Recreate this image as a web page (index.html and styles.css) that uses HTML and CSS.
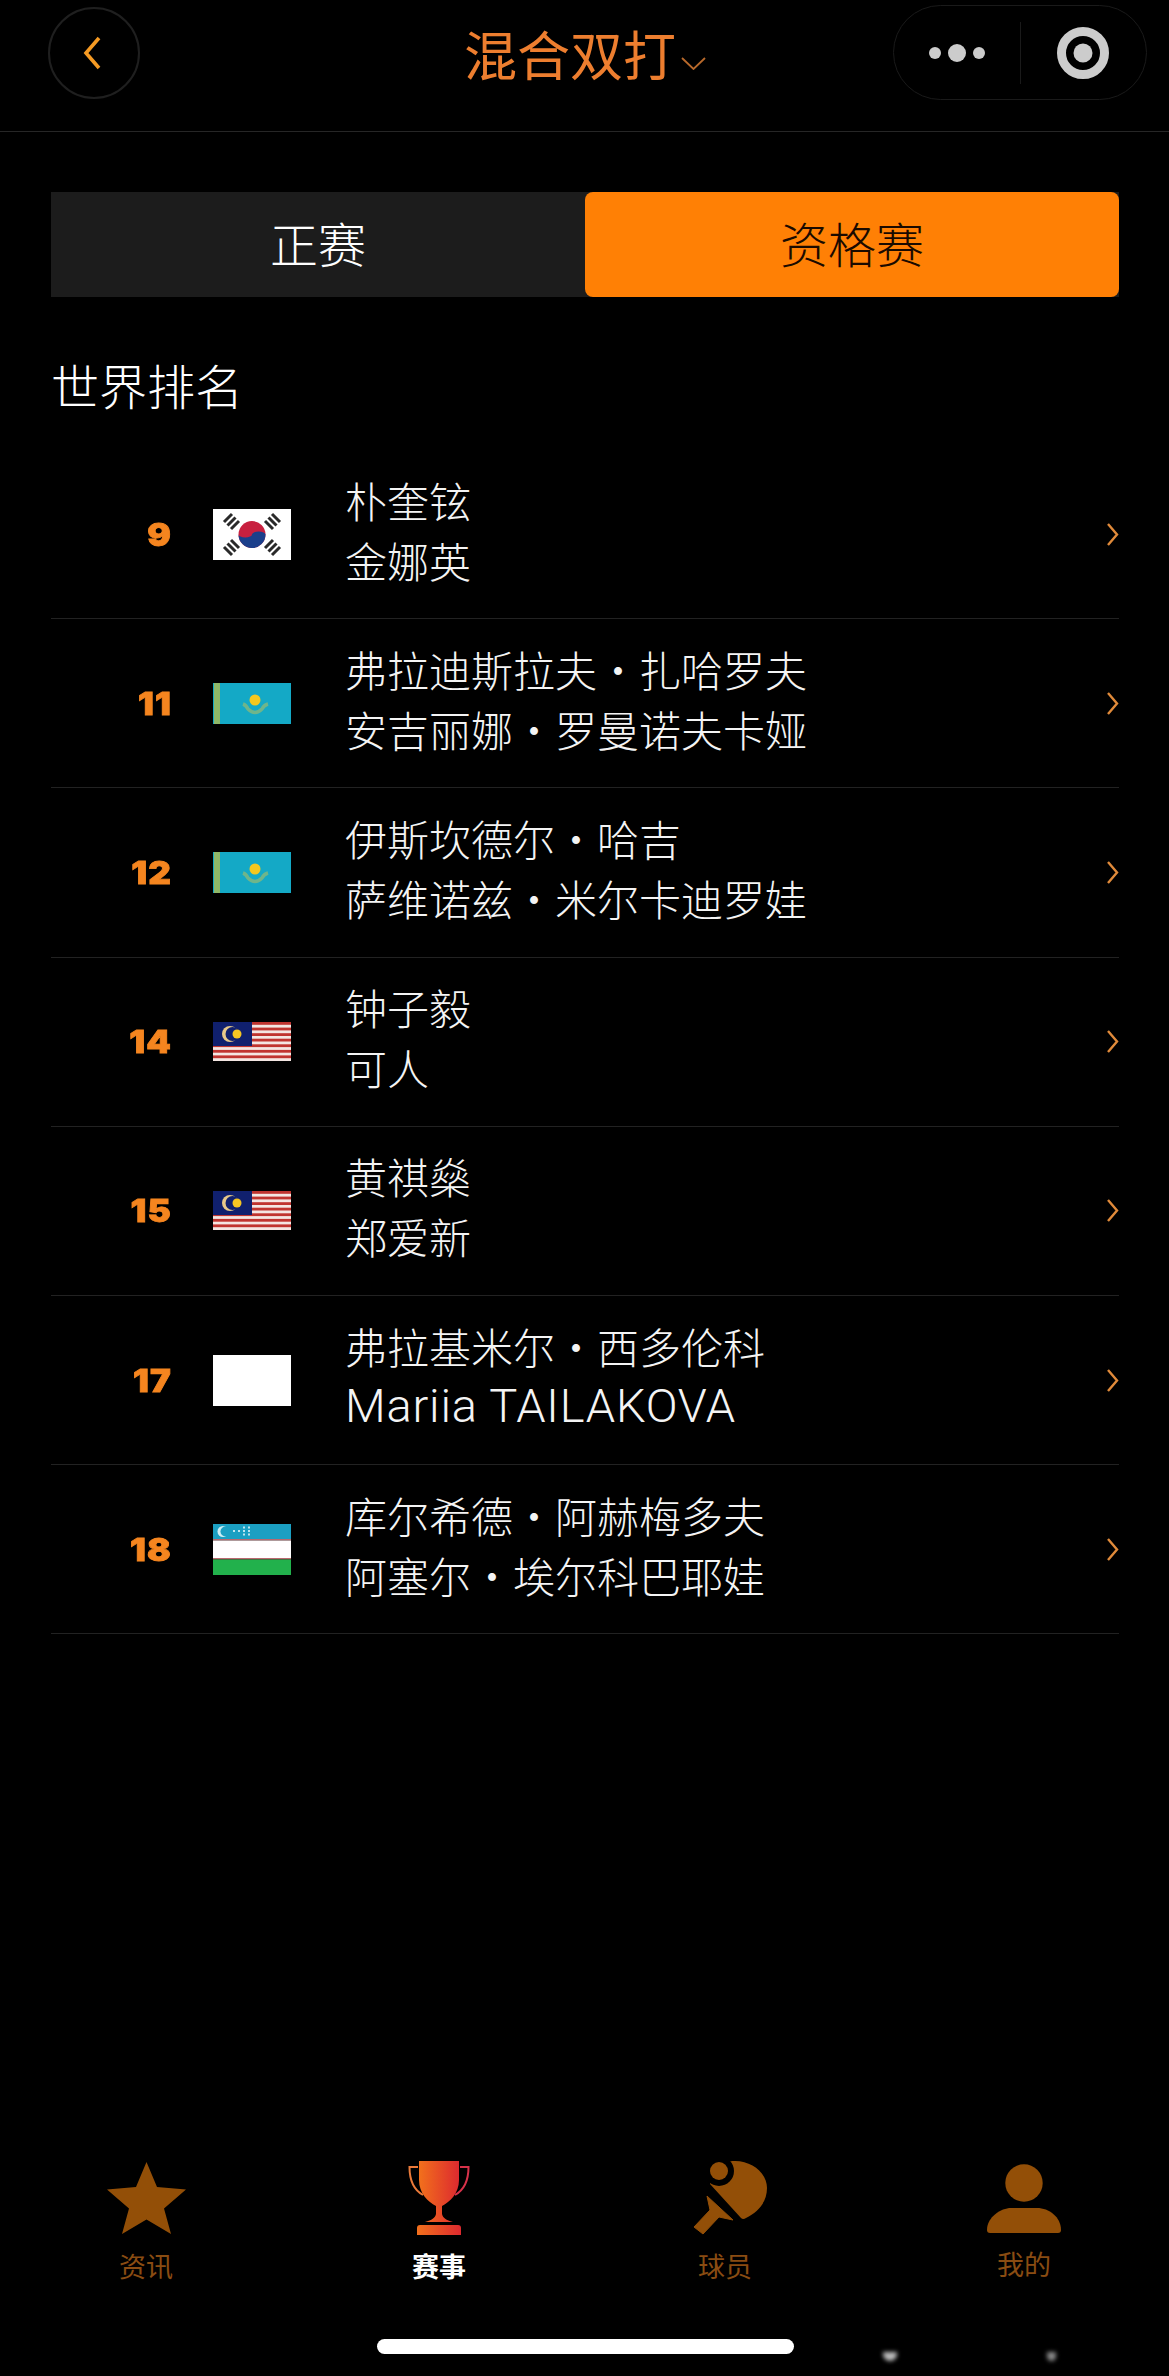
FILE: index.html
```html
<!DOCTYPE html>
<html lang="zh-CN">
<head>
<meta charset="utf-8">
<title>混合双打</title>
<link rel="stylesheet" href="styles.css">
</head>
<body>
<div class="page">
  <header class="header">
    <div class="back"><svg width="18" height="34" viewBox="0 0 18 34"><path d="M16 2 L3 17 L16 32" fill="none" stroke="#f59a23" stroke-width="3.600"/></svg></div>
    <div class="title"><span>混合双打</span><svg class="caret" width="25" height="13" viewBox="0 0 25 13"><path d="M1 1 L12.5 12 L24 1" fill="none" stroke="#b8692b" stroke-width="1.8"/></svg></div>
    <div class="capsule">
      <div class="capsule-part"><svg width="58" height="20" viewBox="0 0 58 20"><circle cx="7" cy="10" r="6" fill="#ccc"/><circle cx="29" cy="10" r="9" fill="#ccc"/><circle cx="51" cy="10" r="6" fill="#ccc"/></svg></div>
      <div class="capsule-line"></div>
      <div class="capsule-part"><svg width="52" height="52" viewBox="0 0 52 52"><circle cx="26" cy="26" r="21.500" fill="none" stroke="#ccc" stroke-width="9"/><circle cx="26" cy="26" r="9.500" fill="#ccc"/></svg></div>
    </div>
  </header>

  <div class="tabs">
    <div class="tab">正赛</div>
    <div class="tab tab-on">资格赛</div>
  </div>

  <h1 class="heading">世界排名</h1>

  <ul class="rows">
    <li class="row">
      <span class="rank">9</span>
      <svg class="flag" width="78" height="51" viewBox="0 0 78 51">
        <rect width="78" height="51" fill="#fff"/>
        <circle cx="39" cy="25.5" r="13.5" fill="#c8203f"/>
        <path d="M25.5 25.5 A13.5 13.5 0 0 0 52.5 25.5 A6.75 3 0 0 0 39 25.5 A6.75 3 0 0 1 25.5 25.500Z" fill="#1b3f8b"/>
        <g stroke="#2a2a2a" stroke-width="3">
          <path d="M11 13 L19 5 M14.500 16.500 L22.500 8.500 M18 20 L26 12"/>
          <path d="M52 12 L60 20 M55.500 8.500 L63.500 16.500 M59 5 L67 13"/>
          <path d="M11 38 L19 46 M14.500 34.500 L22.500 42.500 M18 31 L26 39"/>
          <path d="M52 39 L60 31 M55.500 42.500 L63.500 34.500 M59 46 L67 38"/>
        </g>
      </svg>
      <div class="names"><div>朴奎铉</div><div>金娜英</div></div>
      <svg class="more" width="13" height="25" viewBox="0 0 13 25"><path d="M2 2 L11 12.500 L2 23" fill="none" stroke="#e08a3a" stroke-width="2.400"/></svg>
    </li>
    <li class="row">
      <span class="rank">11</span>
      <svg class="flag" width="78" height="41" viewBox="0 0 78 41">
        <rect width="78" height="41" fill="#14a9c6"/>
        <rect x="1" width="6" height="41" fill="#8fb868"/>
        <path d="M30 21 Q33 22 35 26 Q42 33 49 26 Q51 22 55 21" fill="none" stroke="#6fb58a" stroke-width="3.500"/>
        <circle cx="42" cy="17" r="5.500" fill="#f4c81f"/>
      </svg>
      <div class="names"><div>弗拉迪斯拉夫・扎哈罗夫</div><div>安吉丽娜・罗曼诺夫卡娅</div></div>
      <svg class="more" width="13" height="25" viewBox="0 0 13 25"><path d="M2 2 L11 12.500 L2 23" fill="none" stroke="#e08a3a" stroke-width="2.400"/></svg>
    </li>
    <li class="row">
      <span class="rank">12</span>
      <svg class="flag" width="78" height="41" viewBox="0 0 78 41">
        <rect width="78" height="41" fill="#14a9c6"/>
        <rect x="1" width="6" height="41" fill="#8fb868"/>
        <path d="M30 21 Q33 22 35 26 Q42 33 49 26 Q51 22 55 21" fill="none" stroke="#6fb58a" stroke-width="3.500"/>
        <circle cx="42" cy="17" r="5.500" fill="#f4c81f"/>
      </svg>
      <div class="names"><div>伊斯坎德尔・哈吉</div><div>萨维诺兹・米尔卡迪罗娃</div></div>
      <svg class="more" width="13" height="25" viewBox="0 0 13 25"><path d="M2 2 L11 12.500 L2 23" fill="none" stroke="#e08a3a" stroke-width="2.400"/></svg>
    </li>
    <li class="row">
      <span class="rank">14</span>
      <svg class="flag" width="78" height="39" viewBox="0 0 78 39">
        <rect width="78" height="39" fill="#f4e6e2"/>
        <g fill="#c0342f"><rect width="78" height="2.800"/><rect y="5.600" width="78" height="2.800"/><rect y="11.200" width="78" height="2.800"/><rect y="16.700" width="78" height="2.800"/><rect y="22.300" width="78" height="2.800"/><rect y="27.900" width="78" height="2.800"/><rect y="33.400" width="78" height="2.800"/></g>
        <rect width="39" height="24" fill="#10206e"/>
        <circle cx="17" cy="12" r="8" fill="#e8c98a"/><circle cx="19.500" cy="12" r="7" fill="#10206e"/>
        <circle cx="24" cy="12" r="4.500" fill="#f6c522"/>
      </svg>
      <div class="names"><div>钟子毅</div><div>可人</div></div>
      <svg class="more" width="13" height="25" viewBox="0 0 13 25"><path d="M2 2 L11 12.500 L2 23" fill="none" stroke="#e08a3a" stroke-width="2.400"/></svg>
    </li>
    <li class="row">
      <span class="rank">15</span>
      <svg class="flag" width="78" height="39" viewBox="0 0 78 39">
        <rect width="78" height="39" fill="#f4e6e2"/>
        <g fill="#c0342f"><rect width="78" height="2.800"/><rect y="5.600" width="78" height="2.800"/><rect y="11.200" width="78" height="2.800"/><rect y="16.700" width="78" height="2.800"/><rect y="22.300" width="78" height="2.800"/><rect y="27.900" width="78" height="2.800"/><rect y="33.400" width="78" height="2.800"/></g>
        <rect width="39" height="24" fill="#10206e"/>
        <circle cx="17" cy="12" r="8" fill="#e8c98a"/><circle cx="19.500" cy="12" r="7" fill="#10206e"/>
        <circle cx="24" cy="12" r="4.500" fill="#f6c522"/>
      </svg>
      <div class="names"><div>黄祺燊</div><div>郑爱新</div></div>
      <svg class="more" width="13" height="25" viewBox="0 0 13 25"><path d="M2 2 L11 12.500 L2 23" fill="none" stroke="#e08a3a" stroke-width="2.400"/></svg>
    </li>
    <li class="row">
      <span class="rank">17</span>
      <svg class="flag" width="78" height="51" viewBox="0 0 78 51"><rect width="78" height="51" fill="#fff"/></svg>
      <div class="names"><div>弗拉基米尔・西多伦科</div><div class="latin">Mariia TAILAKOVA</div></div>
      <svg class="more" width="13" height="25" viewBox="0 0 13 25"><path d="M2 2 L11 12.500 L2 23" fill="none" stroke="#e08a3a" stroke-width="2.400"/></svg>
    </li>
    <li class="row">
      <span class="rank">18</span>
      <svg class="flag" width="78" height="51" viewBox="0 0 78 51">
        <rect width="78" height="15" fill="#1b9fc2"/>
        <rect y="15" width="78" height="1.500" fill="#b9686e"/>
        <rect y="16.500" width="78" height="17.500" fill="#fff"/>
        <rect y="34" width="78" height="1.500" fill="#b9686e"/>
        <rect y="35.500" width="78" height="15.500" fill="#22b14c"/>
        <circle cx="10" cy="7.500" r="5.500" fill="#cdeef5"/><circle cx="12.500" cy="7.500" r="5" fill="#1b9fc2"/>
        <g fill="#bfe6f0"><rect x="20" y="6" width="2" height="2"/><rect x="25" y="6" width="2" height="2"/><rect x="30" y="2.500" width="2" height="2"/><rect x="30" y="6" width="2" height="2"/><rect x="30" y="9.500" width="2" height="2"/><rect x="35" y="2.500" width="2" height="2"/><rect x="35" y="6" width="2" height="2"/><rect x="35" y="9.500" width="2" height="2"/></g>
      </svg>
      <div class="names"><div>库尔希德・阿赫梅多夫</div><div>阿塞尔・埃尔科巴耶娃</div></div>
      <svg class="more" width="13" height="25" viewBox="0 0 13 25"><path d="M2 2 L11 12.500 L2 23" fill="none" stroke="#e08a3a" stroke-width="2.400"/></svg>
    </li>
  </ul>

  <nav class="nav">
    <div class="nav-item">
      <svg class="nav-icon" width="79" height="76" viewBox="0 0 79 76"><polygon points="39.500,2 50,27 79,29.500 57,48.500 64,74 39.500,59.500 15,74 22,48.500 0,29.500 29,27" fill="#934f07"/></svg>
      <span class="nav-label">资讯</span>
    </div>
    <div class="nav-item nav-trophy">
      <svg class="nav-icon" width="62" height="76" viewBox="0 0 62 76">
        <defs><linearGradient id="cup" x1="0" y1="0" x2="1" y2="0"><stop offset="0" stop-color="#f2701c"/><stop offset="1" stop-color="#dd2a2f"/></linearGradient></defs>
        <path d="M11 1 H51 V20 C51 33 42 42 34 46 V54 C35 58 38 60 45 62 H17 C24 60 27 58 28 54 V46 C20 42 11 33 11 20 Z" fill="url(#cup)"/>
        <path d="M9 68 Q9 65 12 65 H50 Q53 65 53 68 V75 H9 Z" fill="url(#cup)"/>
        <path d="M10 7 H1.500 C1.500 20 6 30 15 35" fill="none" stroke="#ea7a3a" stroke-width="2"/>
        <path d="M52 7 H60.500 C60.500 20 56 30 47 35" fill="none" stroke="#d8324a" stroke-width="2"/>
      </svg>
      <span class="nav-label nav-label-on">赛事</span>
    </div>
    <div class="nav-item nav-player">
      <svg class="nav-icon" width="75" height="76" viewBox="0 0 75 76">
        <path d="M17 24 C17 10 28 1 42 1 C60 1 74 14 74 28 C74 42 65 52 53 58 Q50 60 48 58 Z" fill="#934f07"/>
        <circle cx="26" cy="11" r="15" fill="#000"/>
        <circle cx="26" cy="11" r="9" fill="#934f07"/>
        <path d="M14 36 L40 60 L26 57 L10 74 L1 67 L17 50 Z" fill="#934f07" stroke="#934f07" stroke-linejoin="round"/>
      </svg>
      <span class="nav-label">球员</span>
    </div>
    <div class="nav-item nav-me">
      <svg class="nav-icon" width="74" height="71" viewBox="0 0 74 71">
        <circle cx="37" cy="21" r="18.700" fill="#934f07"/>
        <path d="M0 68 C0 55 14 46 24 46 H50 C62 46 74 55 74 68 Q74 71 71 71 H3 Q0 71 0 68Z" fill="#934f07"/>
      </svg>
      <span class="nav-label">我的</span>
    </div>
  </nav>
  <div class="home-row"><div class="home-bar"></div></div>
  <span class="speck speck-a"></span>
  <span class="speck speck-b"></span>
</div>
</body>
</html>
```
FILE: styles.css
```css
* { box-sizing: border-box; }
html, body { margin: 0; padding: 0; background: #000; }
body { font-family: "Noto Sans CJK SC", "Liberation Sans", sans-serif; color: #fff; }
.page { position: relative; width: 1169px; height: 2376px; display: flex; flex-direction: column; }

.header { height: 132px; flex: none; display: grid; grid-template-columns: 416px auto 1fr; padding: 5px 22px 0 48px; border-bottom: 1px solid #262626; align-items: start; }
.back { width: 92px; height: 92px; margin-top: 2px; border: 2px solid #1f1f1f; border-radius: 50%; display: flex; align-items: center; padding-left: 33px; }
.title { display: flex; align-items: center; height: 96px; color: #ed7e2f; font-size: 53px; font-weight: 400; line-height: 96px; }
.caret { margin: 20px 0 0 5px; }
.capsule { justify-self: end; width: 254px; height: 95px; border: 1px solid #1a1a1a; border-radius: 48px; display: flex; align-items: center; }
.capsule-part { flex: 1; display: flex; justify-content: center; align-items: center; }
.capsule-line { width: 1px; height: 62px; background: #1a1a1a; }

.tabs { display: flex; margin: 60px 50px 0 51px; height: 105px; background: #1c1c1c; flex: none; }
.tab { flex: 1; display: flex; justify-content: center; align-items: center; padding-bottom: 5px; font-size: 48px; font-weight: 300; color: #fff; }
.tab-on { background: #ff8005; color: #1a0a00; border-radius: 8px; }

.heading { margin: 57px 0 36px 51px; font-size: 48px; line-height: 60px; font-weight: 300; color: #fff; flex: none; }

.rows { list-style: none; margin: 0 50px 0 51px; padding: 0; flex: none; }
.row { height: 169.200px; border-bottom: 1px solid #222; display: flex; align-items: center; }
.rank { width: 121px; flex: none; text-align: right; font-family: Inter, "DejaVu Sans", sans-serif; font-weight: 900; font-size: 31px; letter-spacing: 1px; color: #f5851f; -webkit-text-stroke: 0.8px #f5851f; transform: scaleX(1.13); transform-origin: right center; }
.flag { flex: none; margin-left: 41px; }
.names { margin-left: 54px; font-size: 42px; line-height: 60px; font-weight: 300; color: #f4f4f4; margin-top: -9px; }
.latin { font-family: Roboto, "Liberation Sans", sans-serif; font-size: 47px; font-weight: 300; letter-spacing: 0.8px; }
.more { margin-left: auto; flex: none; }

.nav { margin-top: auto; display: flex; padding-left: 96px; flex: none; height: 125px; }
.nav-item { width: 100px; display: flex; flex-direction: column; align-items: center; }
.nav-trophy { margin-left: 193px; }
.nav-player { margin-left: 186px; }
.nav-player .nav-icon { margin-left: 10px; }
.nav-me { margin-left: 199px; }
.nav-me .nav-icon { margin-top: 2px; }
.nav-icon { display: block; flex: none; }
.nav-label { margin-top: 12px; font-size: 27px; line-height: 36px; color: #8a4c12; }
.nav-label-on { color: #fff; font-weight: 700; }
.nav-me .nav-label { margin-top: 13px; }

.home-row { flex: none; display: flex; justify-content: center; padding: 54px 0 22px; }
.home-bar { width: 417px; height: 15px; margin-left: 2px; background: #fff; border-radius: 8px; }

.speck { position: absolute; top: 2352px; width: 14px; height: 9px; background: #bbb; border-radius: 0 0 8px 8px; filter: blur(2px); }
.speck-a { left: 883px; }
.speck-b { left: 1047px; width: 9px; background: #888; }
```
